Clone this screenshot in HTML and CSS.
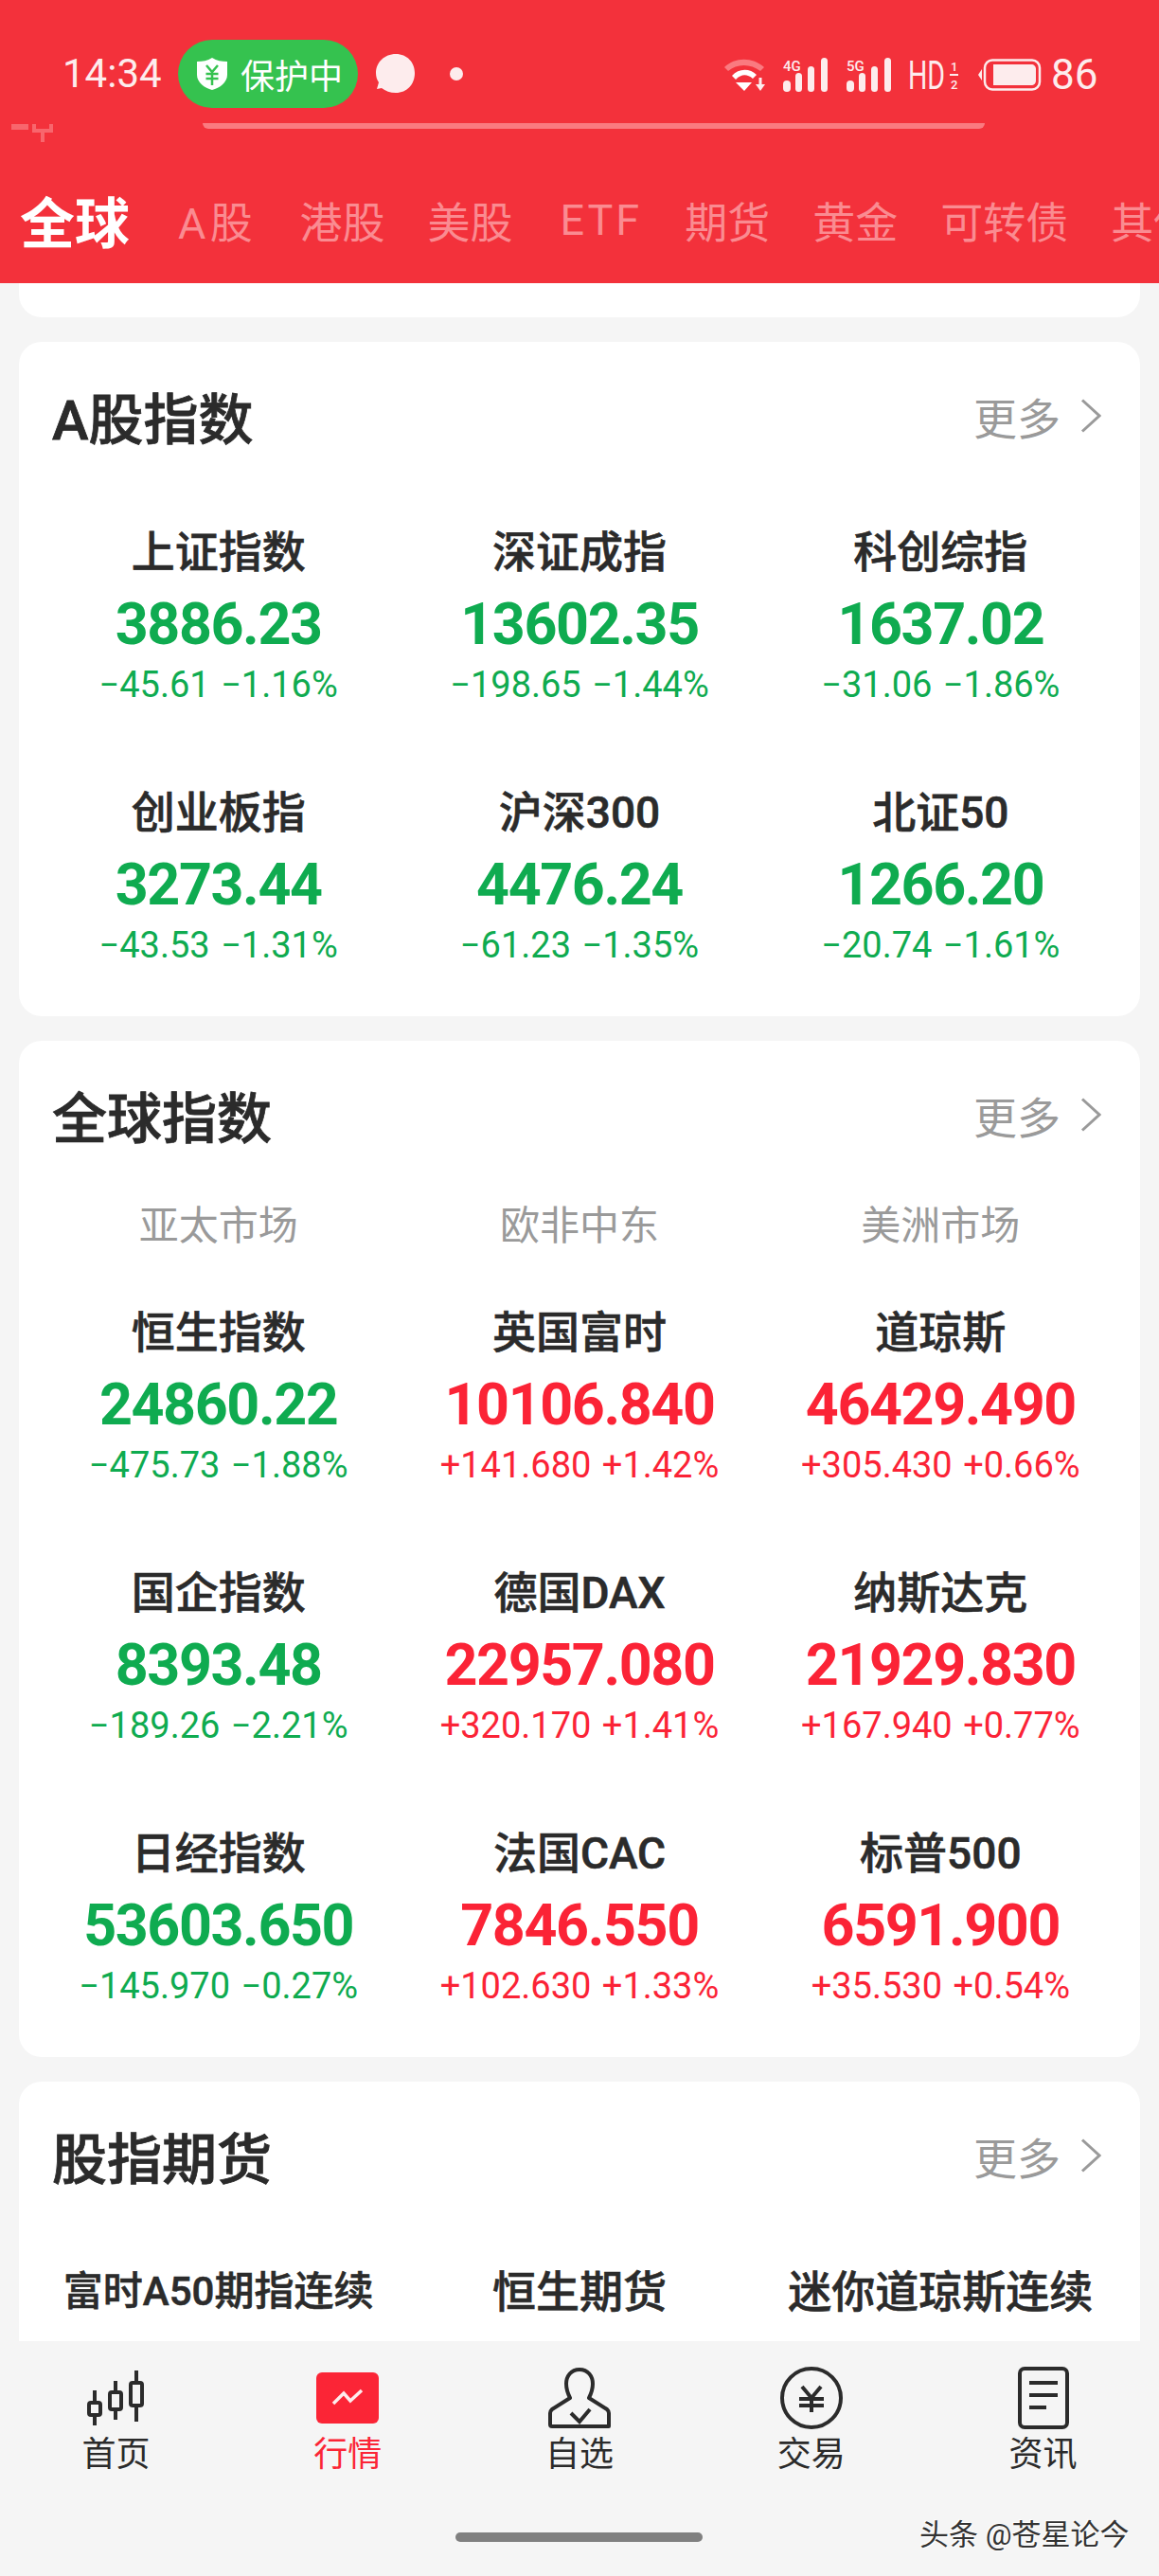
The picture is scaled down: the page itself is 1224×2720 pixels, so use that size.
FILE: index.html
```html
<!DOCTYPE html>
<html lang="zh">
<head>
  <meta charset="utf-8"/>
  <title>行情</title>
  <link rel="stylesheet" href="styles.css">
</head>
<body>
<div class="page">

  <div class="header">
    <div class="status">
      <span class="time">14:34</span>
      <div class="guard">
        <svg class="shield" viewBox="0 0 34 36"><path d="M17 1 C22 4 27 5 33 5 V19 C33 27 25 33 17 35 C9 33 1 27 1 19 V5 C7 5 12 4 17 1Z" fill="#fff"/><path d="M11 9 L17 16 L23 9 M10.500 18 H23.500 M10.500 23 H23.500 M17 16 V30" stroke="#35c24f" stroke-width="2.500" fill="none"/></svg>
        <span>保护中</span>
      </div>
      <svg class="bubble" viewBox="0 0 41 41"><path d="M21 0 C33 0 41 9 41 20 C41 32 33 41 21 41 C15 41 10 39 6 36 L1 37 L3 30 C1 27 0 24 0 20 C0 9 9 0 21 0Z" fill="#fdeced"/></svg>
      <i class="dot"></i>
      <div class="status-right">
        <svg class="wifi" viewBox="0 0 46 36">
          <path d="M2 10 C13 -1 32 -1 44 10 L40 14 C30 6 15 6 6 14Z" fill="#fa7a80"/>
          <path d="M10 19 C17 11 29 11 36 18 L32 22 C26 17 20 17 14 23Z" fill="#fff"/>
          <path d="M14 26 H31 L23 35Z" fill="#fff"/>
          <path d="M35 28 H45 L40 35Z" fill="#fdeced"/>
          <rect x="38.500" y="21" width="3" height="8" fill="#fdeced"/>
        </svg>
        <svg class="signal" viewBox="0 0 47 36">
          <text x="0" y="14" class="net">4G</text>
          <rect x="0" y="24" width="8" height="12" rx="4"/><rect x="13" y="16" width="7" height="20" rx="3.500"/><rect x="26" y="9" width="7" height="27" rx="3.500"/><rect x="40" y="0" width="7" height="36" rx="3.500"/>
        </svg>
        <svg class="signal" viewBox="0 0 47 36">
          <text x="0" y="14" class="net">5G</text>
          <rect x="0" y="24" width="8" height="12" rx="4"/><rect x="13" y="16" width="7" height="20" rx="3.500"/><rect x="26" y="9" width="7" height="27" rx="3.500"/><rect x="40" y="0" width="7" height="36" rx="3.500"/>
        </svg>
        <svg class="hd" viewBox="0 0 53 36">
          <text transform="translate(0,33) scale(.68,1)" class="hd-text">HD</text>
          <text x="45" y="14" class="hd-sub">1</text>
          <text x="45" y="33" class="hd-sub">2</text>
          <rect x="44" y="17" width="9" height="2"/>
        </svg>
        <svg class="battery" viewBox="0 0 67 34">
          <path d="M4 11 L0 17 L4 23Z" fill="#fdeced"/>
          <rect x="7" y="1.500" width="58" height="31" rx="8" fill="none" stroke="#fdeced" stroke-width="2.500"/>
          <path d="M16 6 H56 C59 6 61 8 61 11 V23 C61 26 59 28 56 28 H16Z" fill="#fdeced"/>
        </svg>
        <span class="battery-num">86</span>
      </div>
    </div>
    <div class="notch-line"></div>
    <svg class="ghost" viewBox="0 0 44 20"><rect x="0" y="1" width="18" height="6" fill="#f8666d"/><path d="M24 1 V8 H42 V1 M33 8 V20" stroke="#f8666d" stroke-width="4" fill="none"/></svg>
    <div class="tabs">
      <span class="tab tab-on">全球</span>
      <span class="tab tab-a">A股</span>
      <span class="tab">港股</span>
      <span class="tab">美股</span>
      <span class="tab tab-etf">ETF</span>
      <span class="tab">期货</span>
      <span class="tab">黄金</span>
      <span class="tab">可转债</span>
      <span class="tab">其他</span>
    </div>
  </div>

  <div class="content">
    <div class="card-stub"></div>

    <div class="card">
      <div class="card-head">
        <h2>A股指数</h2>
        <span class="more">更多<svg class="chevron" viewBox="0 0 22 36"><path d="M2 1.500 L20 18 L2 34.500" fill="none" stroke="#9a9a9a" stroke-width="3"/></svg></span>
      </div>
      <div class="grid">
        <div class="cell"><div class="name">上证指数</div><div class="value down">3886.23</div><div class="change down">−45.61 −1.16%</div></div>
        <div class="cell"><div class="name">深证成指</div><div class="value down">13602.35</div><div class="change down">−198.65 −1.44%</div></div>
        <div class="cell"><div class="name">科创综指</div><div class="value down">1637.02</div><div class="change down">−31.06 −1.86%</div></div>
        <div class="cell"><div class="name">创业板指</div><div class="value down">3273.44</div><div class="change down">−43.53 −1.31%</div></div>
        <div class="cell"><div class="name">沪深300</div><div class="value down">4476.24</div><div class="change down">−61.23 −1.35%</div></div>
        <div class="cell"><div class="name">北证50</div><div class="value down">1266.20</div><div class="change down">−20.74 −1.61%</div></div>
      </div>
    </div>

    <div class="card">
      <div class="card-head">
        <h2>全球指数</h2>
        <span class="more">更多<svg class="chevron" viewBox="0 0 22 36"><path d="M2 1.500 L20 18 L2 34.500" fill="none" stroke="#9a9a9a" stroke-width="3"/></svg></span>
      </div>
      <div class="markets">
        <span>亚太市场</span>
        <span>欧非中东</span>
        <span>美洲市场</span>
      </div>
      <div class="grid">
        <div class="cell"><div class="name">恒生指数</div><div class="value down">24860.22</div><div class="change down">−475.73 −1.88%</div></div>
        <div class="cell"><div class="name">英国富时</div><div class="value up">10106.840</div><div class="change up">+141.680 +1.42%</div></div>
        <div class="cell"><div class="name">道琼斯</div><div class="value up">46429.490</div><div class="change up">+305.430 +0.66%</div></div>
        <div class="cell"><div class="name">国企指数</div><div class="value down">8393.48</div><div class="change down">−189.26 −2.21%</div></div>
        <div class="cell"><div class="name">德国DAX</div><div class="value up">22957.080</div><div class="change up">+320.170 +1.41%</div></div>
        <div class="cell"><div class="name">纳斯达克</div><div class="value up">21929.830</div><div class="change up">+167.940 +0.77%</div></div>
        <div class="cell"><div class="name">日经指数</div><div class="value down">53603.650</div><div class="change down">−145.970 −0.27%</div></div>
        <div class="cell"><div class="name">法国CAC</div><div class="value up">7846.550</div><div class="change up">+102.630 +1.33%</div></div>
        <div class="cell"><div class="name">标普500</div><div class="value up">6591.900</div><div class="change up">+35.530 +0.54%</div></div>
      </div>
    </div>

    <div class="card">
      <div class="card-head">
        <h2>股指期货</h2>
        <span class="more">更多<svg class="chevron" viewBox="0 0 22 36"><path d="M2 1.500 L20 18 L2 34.500" fill="none" stroke="#9a9a9a" stroke-width="3"/></svg></span>
      </div>
      <div class="grid">
        <div class="cell"><div class="name name-small">富时A50期指连续</div></div>
        <div class="cell"><div class="name">恒生期货</div></div>
        <div class="cell"><div class="name">迷你道琼斯连续</div></div>
      </div>
    </div>
  </div>

  <div class="tabbar">
    <div class="nav-item">
      <svg class="nav-icon" viewBox="0 0 66 66" fill="none" stroke="#2b2b2b" stroke-width="4">
        <rect x="5" y="38" width="12" height="13" rx="2"/><path d="M11 25 V38 M11 51 V62"/>
        <rect x="27" y="27" width="12" height="18" rx="2"/><path d="M33 15 V27 M33 45 V56"/>
        <rect x="49" y="17" width="12" height="24" rx="2"/><path d="M55 4 V17 M55 41 V58"/>
      </svg>
      <span>首页</span>
    </div>
    <div class="nav-item nav-on">
      <svg class="nav-icon" viewBox="0 0 66 66">
        <rect x="0" y="6" width="66" height="54" rx="6" fill="#fb2536"/>
        <path d="M18 39 L29 28 L36 36 L48 25" fill="none" stroke="#fdeced" stroke-width="3.500"/>
      </svg>
      <span>行情</span>
    </div>
    <div class="nav-item">
      <svg class="nav-icon" viewBox="0 0 66 66" fill="none" stroke="#2b2b2b" stroke-width="4">
        <path d="M33 3 C42 3 47 10 47 18 C47 24 45 29 43 33 L62 45 Q64 47 64 49 V63 H4 Q2 63 2 61 V49 Q2 47 4 45 L23 33 C21 29 19 24 19 18 C19 10 24 3 33 3Z" stroke-linejoin="round"/>
        <path d="M24 49 L33 58 L44 45"/>
      </svg>
      <span>自选</span>
    </div>
    <div class="nav-item">
      <svg class="nav-icon" viewBox="0 0 66 66" fill="none" stroke="#2b2b2b" stroke-width="4">
        <circle cx="33" cy="33" r="31"/>
        <path d="M23 21 L33 33 L43 21 M20 34 H46 M20 41 H46 M33 33 V48"/>
      </svg>
      <span>交易</span>
    </div>
    <div class="nav-item">
      <svg class="nav-icon" viewBox="0 0 66 66" fill="none" stroke="#2b2b2b" stroke-width="4">
        <rect x="8" y="2" width="50" height="62" rx="5"/>
        <path d="M18 17 H48 M18 30 H48 M18 43 H36"/>
      </svg>
      <span>资讯</span>
    </div>
  </div>

  <div class="home-bar"></div>
  <div class="watermark">头条 @苍星论今</div>
</div>
</body>
</html>
```

FILE: styles.css
```css
* {
    box-sizing: border-box;
}
html, body {
    margin: 0;
    padding: 0;
}
body {
    font-family: Roboto, "Noto Sans CJK SC", sans-serif;
    color: #2b2b2b;
}
.page {
    position: relative;
    width: 1224px;
    height: 2720px;
    background: #f5f5f5;
    display: flex;
    flex-direction: column;
    overflow: hidden;
}

/* red header */
.header {
    position: relative;
    height: 299px;
    flex: none;
    background: #f3313b;
    overflow: hidden;
}
.status {
    height: 130px;
    padding: 42px 66px 0 66px;
    display: flex;
    align-items: flex-start;
    color: #fdeced;
}
.time {
    font-size: 42px;
    line-height: 72px;
    width: 122px;
}
.guard {
    width: 190px;
    height: 72px;
    border-radius: 36px;
    background: #35c24f;
    display: flex;
    align-items: center;
    padding-left: 19px;
    color: #fff;
    font-size: 36px;
}
.shield {
    width: 34px;
    height: 36px;
    margin-right: 13px;
}
.bubble {
    width: 41px;
    height: 41px;
    margin: 15px 0 0 19px;
}
.dot {
    width: 14px;
    height: 14px;
    margin: 29px 0 0 37px;
    border-radius: 50%;
    background: #fdeced;
}
.status-right {
    margin-left: auto;
    display: flex;
    align-items: center;
    height: 72px;
    padding-top: 2px;
}
.status-right svg {
    overflow: visible;
}
.wifi {
    width: 46px;
    height: 36px;
    margin-right: 18px;
}
.signal {
    width: 47px;
    height: 36px;
    margin-right: 20px;
    fill: #fdeced;
}
.net {
    font-size: 15px;
    font-weight: 500;
}
.hd {
    width: 53px;
    height: 36px;
    margin-right: 21px;
    margin-left: -2px;
    fill: #fdeced;
}
.hd-text {
    font-size: 42px;
}
.hd-sub {
    font-size: 13px;
    font-weight: 500;
}
.battery {
    width: 67px;
    height: 34px;
    margin-right: 10px;
}
.battery-num {
    font-size: 44px;
    line-height: 44px;
    width: 48px;
}
.notch-line {
    margin: 0 184px 0 214px;
    height: 6px;
    background: #fa7a80;
    border-radius: 0 0 8px 8px;
}
.ghost {
    position: absolute;
    left: 12px;
    top: 130px;
    width: 44px;
    height: 20px;
}
.tabs {
    display: flex;
    align-items: center;
    gap: 45px;
    height: 64px;
    margin-top: 64px;
    padding-left: 21px;
    white-space: nowrap;
    font-size: 45px;
    color: #fa8b91;
}
.tab-on {
    font-size: 58px;
    font-weight: bold;
    color: #fff;
    margin-right: 6px;
}
.tab-a {
    letter-spacing: 4.500px;
}
.tab-etf {
    letter-spacing: 3px;
    margin-left: 5px;
}

/* cards */
.content {
    flex: 1;
    min-height: 0;
    overflow: hidden;
    padding: 0 20px;
    display: flex;
    flex-direction: column;
    gap: 26px;
}
.card-stub {
    height: 36px;
    flex: none;
    background: #fff;
    border-radius: 0 0 24px 24px;
}
.card {
    flex: none;
    background: #fff;
    border-radius: 24px;
    padding-bottom: 52px;
    display: flex;
    flex-direction: column;
}
.card-head {
    height: 164px;
    padding: 0 41px 8px 35px;
    display: flex;
    align-items: center;
    justify-content: space-between;
}
.card-head h2 {
    margin: 0;
    font-size: 58px;
    font-weight: 500;
    -webkit-text-stroke: 0.8px #2b2b2b;
    color: #2b2b2b;
}
.more {
    display: flex;
    align-items: center;
    font-size: 46px;
    color: #9a9a9a;
}
.chevron {
    width: 22px;
    height: 36px;
    margin-left: 21px;
}
.markets {
    display: grid;
    grid-template-columns: repeat(3, 1fr);
    padding: 0 20px;
    margin-top: 3px;
    margin-bottom: 25px;
    font-size: 42px;
    line-height: 58px;
    text-align: center;
    color: #9a9a9a;
}
.grid {
    display: grid;
    grid-template-columns: repeat(3, 1fr);
    row-gap: 83px;
    padding: 0 20px;
    margin-top: 29px;
    text-align: center;
}
.name {
    font-size: 46px;
    line-height: 58px;
    font-weight: 500;
    -webkit-text-stroke: 0.6px #2b2b2b;
    white-space: nowrap;
}
.name-small {
    font-size: 42px;
}
.value {
    margin-top: 8px;
    font-size: 61px;
    line-height: 78px;
    font-weight: bold;
    letter-spacing: -1.400px;
}
.change {
    margin-top: 2px;
    font-size: 38px;
    line-height: 46px;
    word-spacing: 2px;
    white-space: nowrap;
}
.down {
    color: #0fab50;
}
.up {
    color: #fb2336;
}

/* bottom nav */
.tabbar {
    flex: none;
    height: 248px;
    padding-top: 27px;
    display: flex;
    background: #f5f5f5;
}
.nav-item {
    flex: 1;
    display: flex;
    flex-direction: column;
    align-items: center;
    font-size: 36px;
    line-height: 44px;
    color: #2b2b2b;
}
.nav-icon {
    width: 66px;
    height: 66px;
    margin-bottom: 5px;
}
.nav-on {
    color: #fb2536;
}
.home-bar {
    position: absolute;
    left: 481px;
    top: 2674px;
    width: 261px;
    height: 10px;
    border-radius: 5px;
    background: #808080;
}
.watermark {
    position: absolute;
    left: 971px;
    top: 2658px;
    font-size: 31px;
    line-height: 38px;
    color: #333;
    text-shadow: 1px 1px 0 #fff, -1px -1px 0 #fff;
    white-space: nowrap;
}
```
